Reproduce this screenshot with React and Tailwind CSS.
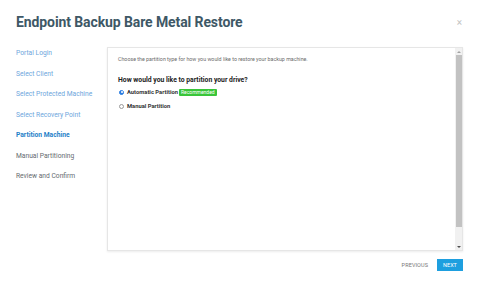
import React from 'react';

const steps = [
    { label: 'Portal Login', state: 'done' },
    { label: 'Select Client', state: 'done' },
    { label: 'Select Protected Machine', state: 'done' },
    { label: 'Select Recovery Point', state: 'done' },
    { label: 'Partition Machine', state: 'current' },
    { label: 'Manual Partitioning', state: 'todo' },
    { label: 'Review and Confirm', state: 'todo' },
];

const stepColor = {
    done: 'text-[#6ea6dc]',
    current: 'text-[#1f7fc8] font-bold',
    todo: 'text-[#666b70]',
};

const App = () => {
    return (
        <div className="w-[480px] h-[288px] bg-white flex flex-col font-['Roboto',sans-serif] overflow-hidden">
            {/* Header */}
            <div className="flex items-start justify-between pl-4 pr-[17px] pt-[13px] h-[47px]">
                <h1 className="text-[14px] leading-[18px] font-bold text-[#3e5866] tracking-[-0.1px]">
                    Endpoint Backup Bare Metal Restore
                </h1>
                <span className="text-[10px] leading-[10px] text-[#c4c4c4] mt-[5px] mr-[1px]">×</span>
            </div>

            {/* Body */}
            <div className="flex pl-4 pr-[17px]">
                {/* Steps */}
                <ul className="w-[91px] flex flex-col -mt-[4px]">
                    {steps.map((s) => (
                        <li key={s.label} className={`h-[20.5px] flex items-center text-[6.7px] ${stepColor[s.state]}`}>
                            {s.label}
                        </li>
                    ))}
                </ul>

                {/* Panel */}
                <div className="flex-1 h-[204px] border border-[#e6e6e6] shadow-[0_1px_2px_rgba(0,0,0,0.08)] flex">
                    <div className="flex-1 pl-[10px] pt-[7px]">
                        <p className="text-[5.3px] leading-[8px] text-[#6b6b6b]">
                            Choose the partition type for how you would like to restore your backup machine.
                        </p>
                        <p className="mt-[13px] text-[6.8px] leading-[9px] font-bold text-[#222]">
                            How would you like to partition your drive?
                        </p>
                        <label className="flex items-center mt-[2px] h-[10px]">
                            <span className="w-[5px] h-[5px] rounded-full bg-[#2a7de1] border border-[#2a7de1] flex items-center justify-center ml-[1px]">
                                <span className="w-[2px] h-[2px] rounded-full bg-white" />
                            </span>
                            <span className="ml-[3px] text-[5.8px] font-bold text-[#333]">Automatic Partition</span>
                            <span className="ml-[1px] bg-[#39c539] text-white text-[5px] leading-[7px] px-[2px] rounded-[1px]">
                                Recommended
                            </span>
                        </label>
                        <label className="flex items-center mt-[4px] h-[10px]">
                            <span className="w-[5px] h-[5px] rounded-full border border-[#9a9a9a] bg-white ml-[1px]" />
                            <span className="ml-[3px] text-[5.8px] font-bold text-[#333]">Manual Partition</span>
                        </label>
                    </div>

                    {/* Scrollbar */}
                    <div className="w-[7px] bg-[#f1f1f1] flex flex-col items-center">
                        <div className="h-[7px] flex items-center justify-center">
                            <div className="w-0 h-0 border-l-[2px] border-r-[2px] border-b-[2px] border-l-transparent border-r-transparent border-b-[#a3a3a3]" />
                        </div>
                        <div className="w-[6px] h-[172px] bg-[#c2c2c2]" />
                        <div className="flex-1" />
                        <div className="h-[7px] flex items-center justify-center">
                            <div className="w-0 h-0 border-l-[2px] border-r-[2px] border-t-[2px] border-l-transparent border-r-transparent border-t-[#505050]" />
                        </div>
                    </div>
                </div>
            </div>

            {/* Footer */}
            <div className="flex items-center justify-end pr-[17px] mt-[8px] gap-[9px]">
                <button className="text-[5.5px] text-[#777] tracking-[0.1px]">PREVIOUS</button>
                <button className="w-[26px] h-[12px] bg-[#1e9fdf] text-white text-[5.5px] flex items-center justify-center">
                    NEXT
                </button>
            </div>
        </div>
    );
};

export default App;
